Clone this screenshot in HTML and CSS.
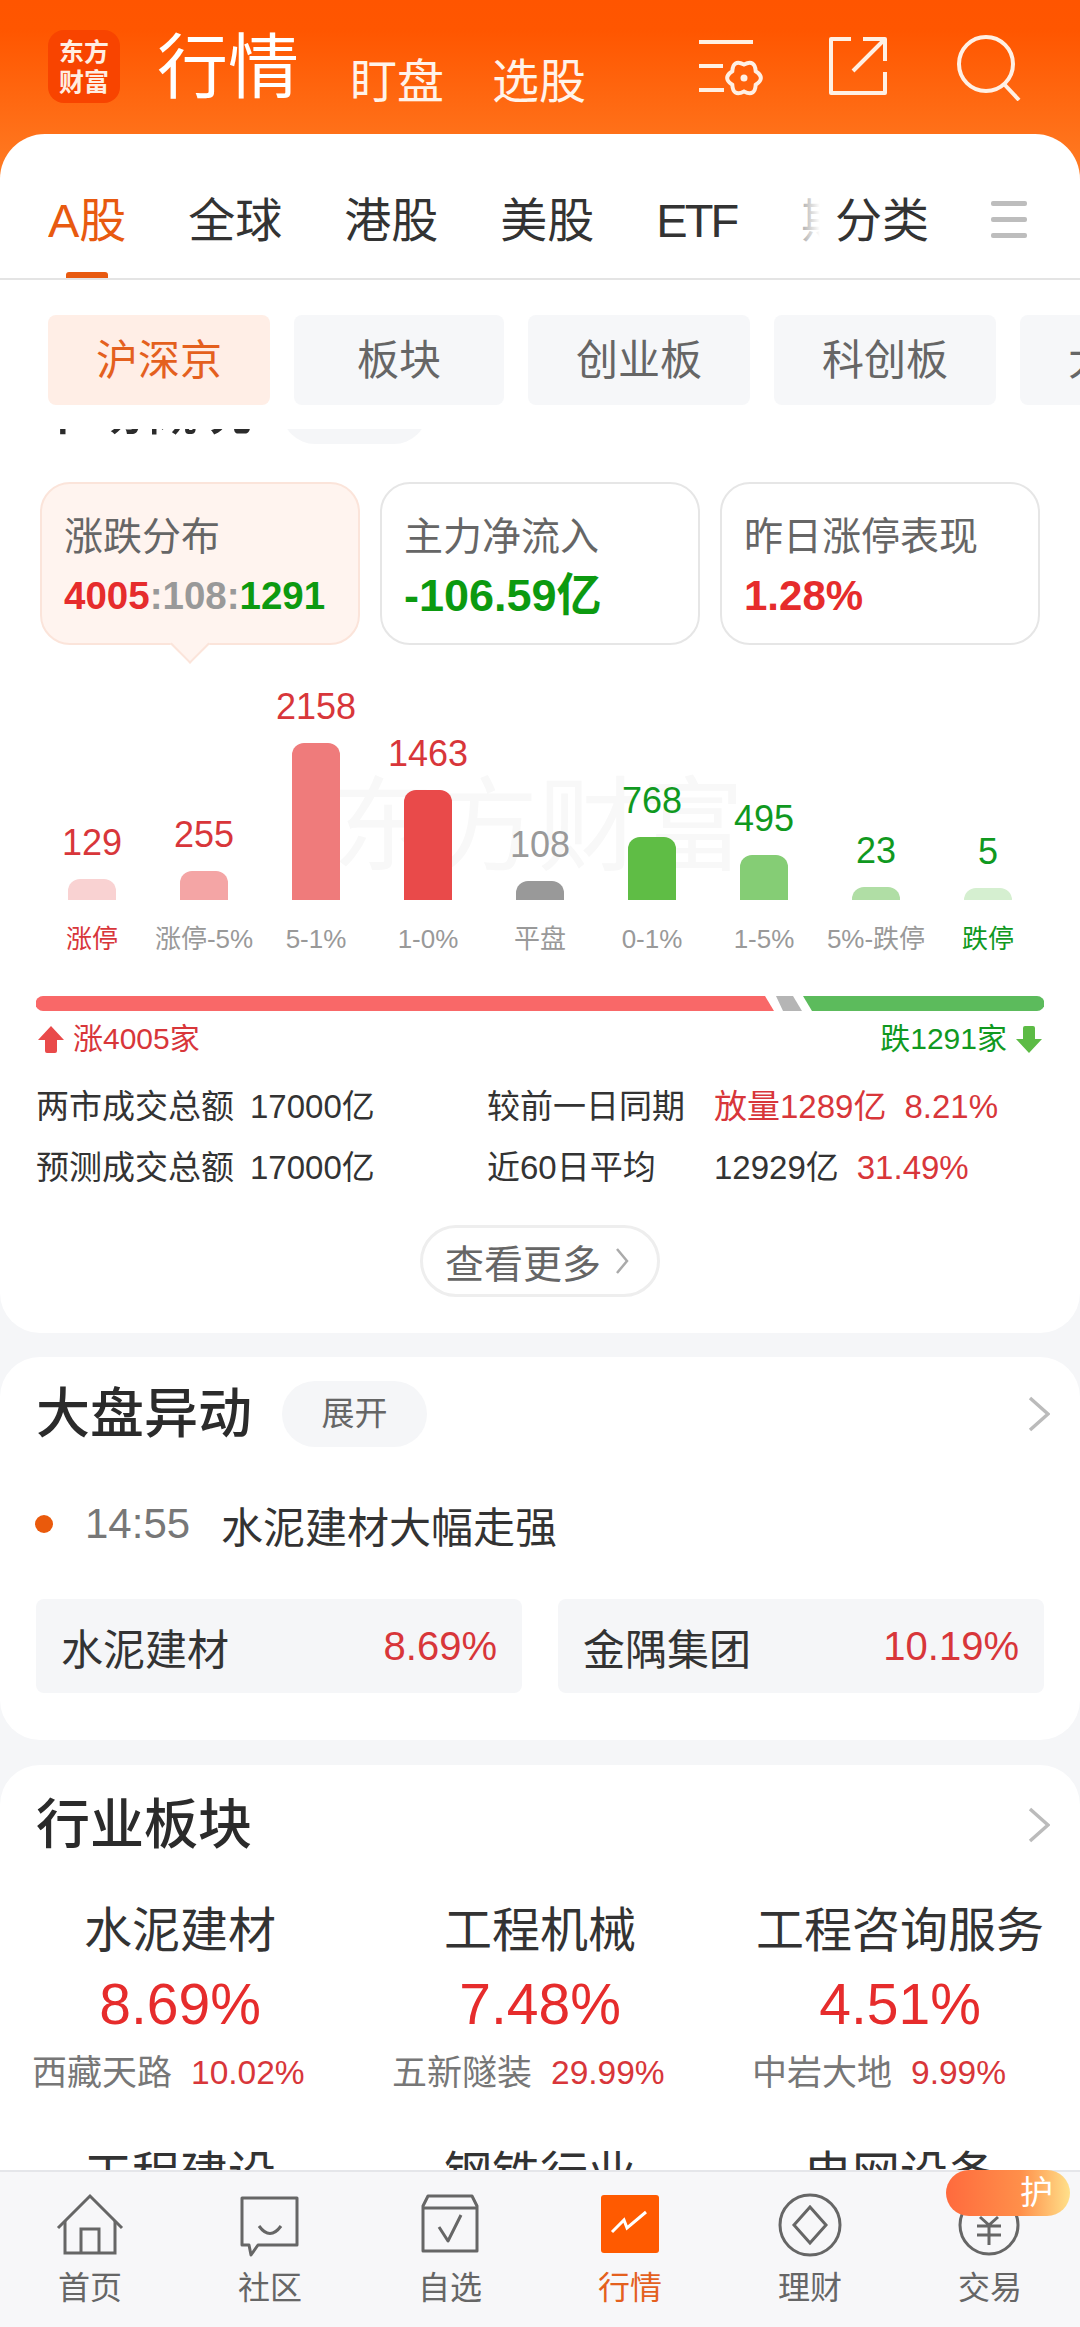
FILE: index.html
```html
<!DOCTYPE html>
<html lang="zh-CN">
<head>
<meta charset="utf-8">
<title>行情</title>
<link rel="stylesheet" href="styles.css">
</head>
<body>
<div class="app">
  <header class="top">
    <div class="logo"><span>东方</span><span>财富</span></div>
    <div class="top-title">行情</div>
    <div class="top-link first">盯盘</div>
    <div class="top-link">选股</div>
    <div class="top-icons">
      <svg class="ti ti-a" viewBox="0 0 72 64" fill="none" stroke="#fff0e4" stroke-width="4">
        <path d="M0 4H54M0 28H24M0 52H25"/>
        <path transform="translate(0 2)" d="M56.700 31.250Q67 38 56.700 44.750Q56 57 45 51.500Q34 57 33.300 44.750Q23 38 33.300 31.250Q34 19 45 24.500Q56 19 56.700 31.250Z"/>
        <circle cx="45" cy="40" r="3.500" fill="#fff0e4" stroke="none"/>
      </svg>
      <svg class="ti ti-b" viewBox="0 0 58 58" fill="none" stroke="#fff0e4" stroke-width="4" stroke-linejoin="round">
        <path d="M22 2H2V56H56V35"/>
        <path d="M34 2H56V24M56 2L24 34"/>
      </svg>
      <svg class="ti ti-c" viewBox="0 0 64 66" fill="none" stroke="#fff0e4" stroke-width="4">
        <circle cx="29" cy="29" r="27"/>
        <path d="M47 49L62 65"/>
      </svg>
    </div>
  </header>

  <div class="sheet">
    <nav class="tabs">
      <div class="tab-scroll">
        <span class="tab on">A股</span>
        <span class="tab">全球</span>
        <span class="tab">港股</span>
        <span class="tab">美股</span>
        <span class="tab etf">ETF</span>
        <span class="tab">期货</span>
      </div>
      <span class="tab tab-fixed">分类</span>
      <div class="burger"><i></i><i></i><i></i></div>
    </nav>
    <div class="chips">
      <span class="chip on c1">沪深京</span>
      <span class="chip c2">板块</span>
      <span class="chip c3">创业板</span>
      <span class="chip c3">科创板</span>
      <span class="chip c3">大盘股</span>
    </div>
  </div>

  <main class="scroller">
    <section class="card card-a">
      <div class="head"><h2>市场概况</h2><span class="pill">展开</span></div>
      <div class="stats">
        <div class="stat active">
          <div class="stat-l">涨跌分布</div>
          <div class="stat-v tight"><b class="up">4005</b><b class="flat">:108:</b><b class="down">1291</b></div>
        </div>
        <div class="stat">
          <div class="stat-l">主力净流入</div>
          <div class="stat-v wide down">-106.59亿</div>
        </div>
        <div class="stat">
          <div class="stat-l">昨日涨停表现</div>
          <div class="stat-v up">1.28%</div>
        </div>
      </div>

      <div class="chart">
        <div class="wm">东方财富</div>
        <div class="col"><span class="val up-t">129</span><i class="b b1" style="height:21px"></i></div>
        <div class="col"><span class="val up-t">255</span><i class="b b2" style="height:29px"></i></div>
        <div class="col"><span class="val up-t">2158</span><i class="b b3" style="height:157px"></i></div>
        <div class="col"><span class="val up-t">1463</span><i class="b b4" style="height:110px"></i></div>
        <div class="col"><span class="val flat">108</span><i class="b b5" style="height:19px"></i></div>
        <div class="col"><span class="val dn-t">768</span><i class="b b6" style="height:63px"></i></div>
        <div class="col"><span class="val dn-t">495</span><i class="b b7" style="height:45px"></i></div>
        <div class="col"><span class="val dn-t">23</span><i class="b b8" style="height:13px"></i></div>
        <div class="col"><span class="val dn-t">5</span><i class="b b9" style="height:12px"></i></div>
      </div>
      <div class="labels">
        <span class="up-t">涨停</span><span>涨停-5%</span><span>5-1%</span><span>1-0%</span><span>平盘</span><span>0-1%</span><span>1-5%</span><span>5%-跌停</span><span class="dn-t">跌停</span>
      </div>

      <svg class="ratio" viewBox="0 0 1008 15" preserveAspectRatio="none">
        <path d="M7 0H729L738 15H7A7 7 0 0 1 7 0Z" fill="#f96868"/>
        <path d="M740 0H757L766 15H747Z" fill="#b5b5b5"/>
        <path d="M767 0H1001A7.500 7.500 0 0 1 1001 15H776Z" fill="#5cbb5c"/>
      </svg>
      <div class="legend">
        <span class="lg up-t"><svg viewBox="0 0 26 27"><path d="M13 0L26 14H19V25Q19 27 17 27H9Q7 27 7 25V14H0Z" fill="#e94a4a"/></svg>涨4005家</span>
        <span class="lg dn-t">跌1291家<svg viewBox="0 0 26 27"><path d="M13 27L26 13H19V2Q19 0 17 0H9Q7 0 7 2V13H0Z" fill="#5cbb45"/></svg></span>
      </div>

      <div class="vol">
        <div class="vol-row"><span class="v1">两市成交总额</span><span class="v2">17000亿</span><span class="v3">较前一日同期</span><span class="v4 up-t">放量1289亿</span><span class="v5 up-t">8.21%</span></div>
        <div class="vol-row"><span class="v1">预测成交总额</span><span class="v2">17000亿</span><span class="v3">近60日平均</span><span class="v4">12929亿</span><span class="v5 up-t">31.49%</span></div>
      </div>
      <div class="more-wrap">
        <div class="more">查看更多<svg viewBox="0 0 14 26" fill="none" stroke="#aaa" stroke-width="2.500"><path d="M2 1L12 13L2 25"/></svg></div>
      </div>
    </section>

    <section class="card card-b">
      <div class="head"><h2>大盘异动</h2><span class="pill">展开</span>
        <svg class="chev" viewBox="0 0 22 36" fill="none" stroke="#bbb" stroke-width="3.500"><path d="M2 2L20 18L2 34"/></svg>
      </div>
      <div class="event"><i class="dot"></i><span class="time">14:55</span><span class="ev-t">水泥建材大幅走强</span></div>
      <div class="pair">
        <div class="pair-i"><span>水泥建材</span><span class="up-t pct">8.69%</span></div>
        <div class="pair-i"><span>金隅集团</span><span class="up-t pct">10.19%</span></div>
      </div>
    </section>

    <section class="card card-c">
      <div class="head"><h2>行业板块</h2>
        <svg class="chev" viewBox="0 0 22 36" fill="none" stroke="#bbb" stroke-width="3.500"><path d="M2 2L20 18L2 34"/></svg>
      </div>
      <div class="sectors">
        <div class="sec"><div class="sec-n">水泥建材</div><div class="sec-p">8.69%</div><div class="sec-s"><span>西藏天路</span><b>10.02%</b></div></div>
        <div class="sec"><div class="sec-n">工程机械</div><div class="sec-p">7.48%</div><div class="sec-s"><span>五新隧装</span><b>29.99%</b></div></div>
        <div class="sec"><div class="sec-n">工程咨询服务</div><div class="sec-p">4.51%</div><div class="sec-s"><span>中岩大地</span><b>9.99%</b></div></div>
        <div class="sec"><div class="sec-n">工程建设</div><div class="sec-p">3.92%</div><div class="sec-s"><span>中国中冶</span><b>10.01%</b></div></div>
        <div class="sec"><div class="sec-n">钢铁行业</div><div class="sec-p">3.40%</div><div class="sec-s"><span>华菱钢铁</span><b>10.00%</b></div></div>
        <div class="sec"><div class="sec-n">电网设备</div><div class="sec-p">3.11%</div><div class="sec-s"><span>许继电气</span><b>9.98%</b></div></div>
      </div>
    </section>
  </main>

  <footer class="nav">
    <div class="nav-i"><svg viewBox="0 0 72 64" fill="none" stroke="#666" stroke-width="3">
      <path d="M4 35L36 3L68 35"/><path d="M11 28V60H61V28"/><path d="M27 60V36H45V60"/></svg><span>首页</span></div>
    <div class="nav-i"><svg viewBox="0 0 72 64" fill="none" stroke="#666" stroke-width="3" stroke-linejoin="round">
      <path d="M8 5H63V52H24L17 62L15 52H8Z"/><path d="M25 33Q36 48 47 33"/></svg><span>社区</span></div>
    <div class="nav-i"><svg viewBox="0 0 72 64" fill="none" stroke="#666" stroke-width="3" stroke-linejoin="round">
      <path d="M9 13L14 3H58L63 13V58H9Z"/><path d="M9 15H63"/><path d="M25 34L34 48L47 22"/></svg><span>自选</span></div>
    <div class="nav-i on"><svg viewBox="0 0 72 64" fill="none">
      <rect x="7" y="2" width="58" height="58" rx="3" fill="#ff5a00"/>
      <path d="M18 39L30 27L33 35L52 19" stroke="#fff" stroke-width="3"/></svg><span>行情</span></div>
    <div class="nav-i"><svg viewBox="0 0 72 64" fill="none" stroke="#666" stroke-width="3">
      <circle cx="36" cy="32" r="30"/><path d="M36 14L52 32L36 50L20 32Z"/></svg><span>理财</span></div>
    <div class="nav-i"><svg viewBox="0 0 72 64" fill="none" stroke="#666" stroke-width="3">
      <circle cx="35" cy="32" r="29"/><path d="M26 24L35 32L44 24M23 33H47M23 42H47M35 32V52"/></svg><span>交易</span></div>
    <div class="badge"><span>护</span></div>
  </footer>
</div>
</body>
</html>
```
FILE: styles.css
```css
* { box-sizing: border-box; }
html, body { margin: 0; padding: 0; }
body {
  font-family: "Liberation Sans", "Noto Sans CJK SC", sans-serif;
  color: #333;
  background: #f5f6f8;
}
i { display: block; font-style: normal; }
h2 { margin: 0; font-size: 54px; font-weight: 500; line-height: 66px; color: #2b2b2b; white-space: nowrap; }

.app { width: 1080px; height: 2327px; display: flex; flex-direction: column; overflow: hidden; position: relative; }

/* header */
.top {
  height: 180px; flex: none;
  background: linear-gradient(180deg, #ff5500 0, #ff5600 30px, #ff7a22 170px);
  display: flex; align-items: flex-start; padding: 30px 0 0 48px; color: #fff;
}
.logo {
  width: 72px; height: 73px; border-radius: 16px; background: #f84400;
  display: flex; flex-direction: column; align-items: center; justify-content: center;
  font-size: 25px; font-weight: 700; line-height: 30px; color: #ffeee2;
}
.logo span { display: block; }
.top-title { font-size: 71px; line-height: 76px; margin: 0 0 0 37px; font-weight: 400; }
.top-link { font-size: 47px; line-height: 60px; margin: 22px 0 0 48px; color: #fff3ea; }
.top-link.first { margin-left: 51px; }
.top-icons { margin-left: auto; display: flex; align-items: flex-start; padding-right: 59px; }
.ti { flex: none; }
.ti-a { width: 72px; height: 64px; margin-top: 8px; }
.ti-b { width: 58px; height: 58px; margin: 7px 0 0 58px; }
.ti-c { width: 64px; height: 66px; margin: 5px 0 0 70px; }

/* sheet */
.sheet { margin-top: -46px; background: #fff; border-radius: 45px 45px 0 0; height: 295px; flex: none; position: relative; }
.tabs {
  height: 146px; border-bottom: 2px solid #e4e4e4;
  display: flex; align-items: flex-start; padding: 57px 0 0 48px; position: relative;
}
.tab-scroll { width: 772px; height: 87px; flex: none; display: flex; gap: 62px; overflow: hidden; position: relative; }
.tab-scroll::after {
  content: ""; position: absolute; right: 0; top: 0; width: 30px; height: 100%;
  background: linear-gradient(90deg, rgba(255,255,255,.35), #fff);
}
.tab { font-size: 47px; line-height: 60px; color: #333; flex: none; position: relative; }
.tab.on { color: #e85a10; }
.tab.on::after {
  content: ""; position: absolute; left: 18px; top: 81px; width: 42px; height: 6px;
  background: #e85a10; border-radius: 3px 3px 0 0;
}
.etf { letter-spacing: -3px; margin-right: 3px; }
.tab-fixed { margin-left: 15px; }
.burger { margin: 10px 0 0 62px; width: 36px; display: flex; flex-direction: column; gap: 11px; }
.burger i { height: 5px; background: #bdbdbd; border-radius: 2px; }

.chips { display: flex; gap: 24px; padding: 35px 0 0 48px; overflow: hidden; }
.chip {
  height: 90px; flex: none; border-radius: 8px; background: #f6f7f9; color: #666;
  font-size: 42px; line-height: 92px; text-align: center;
}
.chip.on { background: #ffeee6; color: #e4601e; }
.c1 { width: 222px; }
.c2 { width: 210px; }
.c3 { width: 222px; }

/* scroller */
.scroller { height: 1741px; flex: none; overflow: hidden; background: #f5f6f8; }
.card { background: #fff; border-radius: 40px; padding: 24px 36px 0; margin-bottom: 24px; }
.card-a { margin-top: -75px; height: 979px; padding-left: 0; padding-right: 0; border-radius: 0 0 40px 40px; }
.card-b { height: 383px; }
.card-c { height: 500px; padding-top: 27px; margin-top: 25px; margin-bottom: 0; padding-left: 0; padding-right: 0; border-radius: 40px 40px 0 0; }
.head { display: flex; align-items: center; height: 66px; position: relative; }
.card-a .head, .card-c .head { padding-left: 36px; }
.pill {
  margin-left: 30px; width: 145px; height: 66px; border-radius: 33px; background: #f5f6f8;
  color: #666; font-size: 33px; line-height: 66px; text-align: center;
}
.chev { position: absolute; right: -6px; top: 15px; width: 22px; height: 36px; }
.card-c .chev { right: 30px; }

/* stat cards */
.stats { display: flex; gap: 20px; padding: 0 40px; margin-top: 38px; }
.stat {
  width: 320px; height: 163px; border: 2px solid #e6e6e6; border-radius: 30px;
  padding: 27px 0 0 22px; background: #fff; position: relative;
}
.stat.active { background: #fff4ef; border-color: #fbe4da; }
.stat.active::after {
  content: ""; position: absolute; left: 134px; bottom: -15px; width: 26px; height: 26px;
  background: #fff4ef; border-right: 2px solid #fbe4da; border-bottom: 2px solid #fbe4da;
  transform: rotate(45deg);
}
.stat-l { font-size: 39px; line-height: 52px; color: #666; }
.stat-v { font-size: 42px; line-height: 56px; font-weight: 700; margin-top: 5px; }
.stat-v.tight { font-size: 38.500px; }
.stat-v.wide { font-size: 45px; }
.stat-v b { font-weight: 700; }
.up { color: #e62c2c; }
.down { color: #0c9a10; }
.flat { color: #999; }
.up-t { color: #d8363a; }
.dn-t { color: #10991f; }

/* chart */
.chart {
  height: 255px; margin: 0 36px; display: grid; grid-template-columns: repeat(9, 112px);
  align-items: end; position: relative;
}
.wm {
  position: absolute; left: 296px; top: 123px; font-size: 103px; line-height: 120px;
  color: #f8f8f8; white-space: nowrap;
}
.col { display: flex; flex-direction: column; align-items: center; position: relative; }
.val { font-size: 36px; line-height: 44px; margin-bottom: 14px; }
.b { width: 48px; border-radius: 12px 12px 0 0; }
.b1 { background: #f9d2d2; }
.b2 { background: #f4a5a5; }
.b3 { background: #ef7b7b; }
.b4 { background: #e94a4a; }
.b5 { background: #999; }
.b6 { background: #5fbd45; }
.b7 { background: #85cd75; }
.b8 { background: #b0dea5; }
.b9 { background: #d5efd0; }
.labels {
  margin: 19px 36px 0; display: grid; grid-template-columns: repeat(9, 112px);
  font-size: 26px; line-height: 40px; text-align: center; color: #999; white-space: nowrap;
}

.ratio { display: block; width: 1008px; height: 15px; margin: 37px 0 0 36px; }
.legend { display: flex; justify-content: space-between; margin: 8px 38px 0; height: 40px; font-size: 30px; line-height: 40px; }
.lg { display: flex; align-items: center; gap: 9px; }
.lg svg { width: 26px; height: 27px; flex: none; }

.vol { margin: 18px 36px 0; font-size: 33px; color: #333; }
.vol-row { height: 60.500px; line-height: 60px; display: flex; white-space: nowrap; }
.v1 { width: 214px; }
.v2 { width: 237px; }
.v3 { width: 227px; }
.v4 { margin-right: 18px; }

.more-wrap { display: flex; justify-content: center; margin-top: 27px; }
.more {
  width: 240px; height: 72px; border: 3px solid #eee; border-radius: 36px;
  display: flex; align-items: center; padding-left: 22px;
  font-size: 39px; color: #666;
}
.more svg { width: 14px; height: 26px; margin-left: 14px; flex: none; }

/* card b */
.event { display: flex; align-items: center; margin-top: 47px; height: 60px; }
.dot { width: 18px; height: 18px; border-radius: 50%; background: #ea5a0c; margin-left: -1px; }
.time { font-size: 42px; color: #777; margin-left: 32px; width: 136px; }
.ev-t { font-size: 42px; color: #333; }
.pair { display: flex; gap: 36px; margin-top: 45px; }
.pair-i {
  width: 486px; height: 94px; background: #f5f6f8; border-radius: 8px;
  display: flex; justify-content: space-between; align-items: center; padding: 0 25px;
  font-size: 42px;
}
.pct { font-size: 40px; }

/* card c */
.sectors { display: grid; grid-template-columns: repeat(3, 360px); row-gap: 48px; margin-top: 41px; }
.sec { text-align: center; }
.sec-n { font-size: 48px; line-height: 64px; color: #333; }
.sec-p { font-size: 57px; line-height: 72px; margin-top: 5px; color: #e62c2c; }
.sec-s { display: flex; gap: 19px; margin-top: 11px; padding-left: 32px; font-size: 35px; line-height: 44px; color: #777; }
.sec-s b { font-weight: 400; font-size: 33.500px; color: #d8363a; }

/* nav */
.nav {
  flex: 1; background: #f7f7f9; border-top: 2px solid #e5e6ea;
  display: grid; grid-template-columns: repeat(6, 180px); padding-top: 21px; position: relative;
}
.nav-i { display: flex; flex-direction: column; align-items: center; font-size: 32px; color: #666; }
.nav-i svg { width: 72px; height: 64px; display: block; }
.nav-i span { line-height: 40px; margin-top: 11px; }
.nav-i.on { color: #e4601e; }
.badge {
  position: absolute; left: 946px; top: -2px; width: 124px; height: 46px;
  background: linear-gradient(90deg, #ff6a3d, #ff8f4a 60%, #ffe08a);
  border-radius: 23px; color: #fff; font-size: 33px; line-height: 46px;
  padding-left: 74px;
}
```
